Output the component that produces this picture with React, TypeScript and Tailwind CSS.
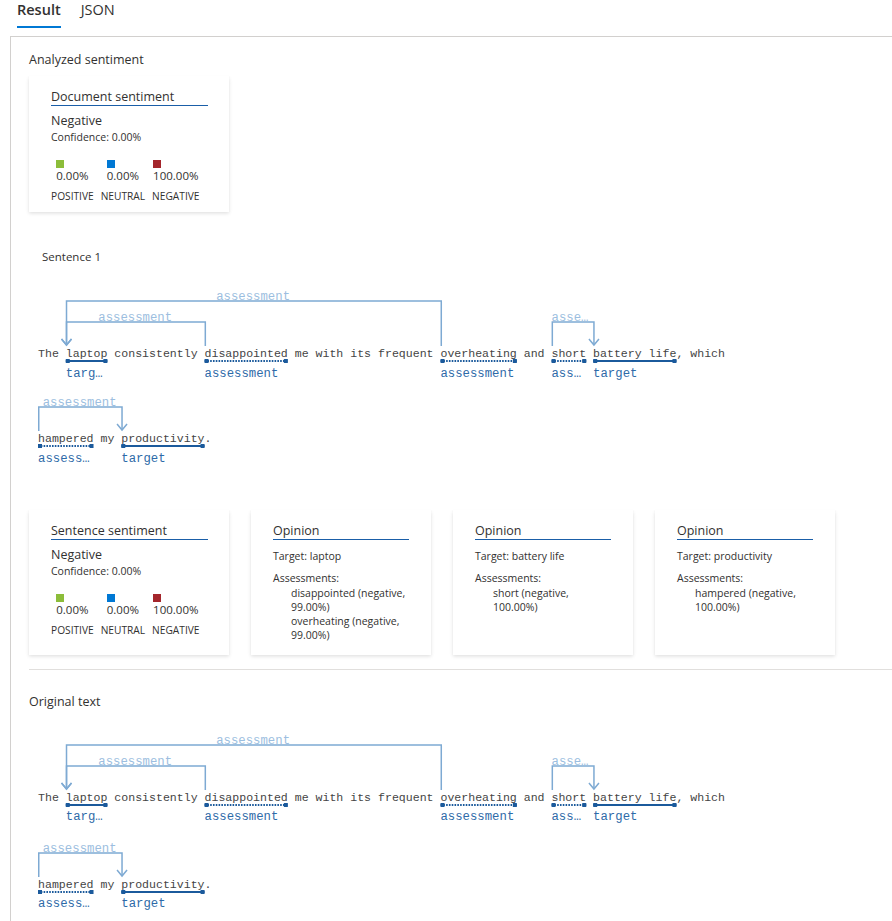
import React from 'react';

type Kind = 'target' | 'assessment';

interface Seg {
  text: string;
  kind?: Kind;
  id?: string;
}

interface Arc {
  from: string;
  to: string;
  level: number;
}

interface LineData {
  segs: Seg[];
  arcs: Arc[];
  levels: number;
}

// width of one monospace character, Liberation Mono at 11.57px
const CW = 6.94;

const lines: LineData[] = [
  {
    levels: 2,
    segs: [
      { text: 'The ' },
      { text: 'laptop', kind: 'target', id: 'laptop' },
      { text: ' consistently ' },
      { text: 'disappointed', kind: 'assessment', id: 'disappointed' },
      { text: ' me with its frequent ' },
      { text: 'overheating', kind: 'assessment', id: 'overheating' },
      { text: ' and ' },
      { text: 'short', kind: 'assessment', id: 'short' },
      { text: ' ' },
      { text: 'battery life', kind: 'target', id: 'battery' },
      { text: ', which' },
    ],
    arcs: [
      { from: 'disappointed', to: 'laptop', level: 1 },
      { from: 'overheating', to: 'laptop', level: 2 },
      { from: 'short', to: 'battery', level: 1 },
    ],
  },
  {
    levels: 1,
    segs: [
      { text: 'hampered', kind: 'assessment', id: 'hampered' },
      { text: ' my ' },
      { text: 'productivity', kind: 'target', id: 'productivity' },
      { text: '.' },
    ],
    arcs: [{ from: 'hampered', to: 'productivity', level: 1 }],
  },
];

const AnnotatedLine: React.FC<{ line: LineData }> = ({ line }) => {
  const yT = line.levels * 21 + 20;
  const h = yT + 28;
  const pos: Record<string, { x: number; w: number; kind: Kind }> = {};
  let idx = 0;
  line.segs.forEach((s) => {
    if (s.id && s.kind) pos[s.id] = { x: idx * CW, w: s.text.length * CW, kind: s.kind };
    idx += s.text.length;
  });
  const total = idx * CW + 20;
  const uy = yT + 9;

  return (
    <div className="relative" style={{ height: h }}>
      <svg className="absolute left-0 top-0 overflow-visible" width={total} height={h}>
        {/* underlines */}
        {Object.values(pos).map((p, i) => (
          <g key={i} fill="#1b5a9c">
            <line
              x1={p.x}
              x2={p.x + p.w}
              y1={uy}
              y2={uy}
              stroke="#1b5a9c"
              strokeWidth={2}
              strokeDasharray={p.kind === 'assessment' ? '1.6 1.2' : undefined}
            />
            <rect x={p.x} y={uy - 2} width={4} height={4} />
            <rect x={p.x + p.w - 4} y={uy - 2} width={4} height={4} />
          </g>
        ))}
        {/* arcs */}
        {line.arcs.map((a, i) => {
          const x1 = pos[a.from].x + 0.75;
          const x2 = pos[a.to].x + 0.75;
          const y = (line.levels - a.level) * 21 + 11;
          return (
            <g key={i} stroke="#7eaad3" strokeWidth={1.5} fill="none">
              <polyline points={`${x1},${yT - 6} ${x1},${y} ${x2},${y} ${x2},${yT - 7}`} />
              <polyline points={`${x2 - 5},${yT - 13} ${x2},${yT - 7} ${x2 + 5},${yT - 13}`} />
            </g>
          );
        })}
      </svg>

      {line.arcs.map((a, i) => {
        const x1 = pos[a.from].x;
        const x2 = pos[a.to].x;
        const y = (line.levels - a.level) * 21 + 11;
        return (
          <span
            key={i}
            className="absolute overflow-hidden text-ellipsis whitespace-nowrap text-center font-['Liberation_Mono',monospace] text-[12.3px] leading-[14px] text-[#9cbee0]"
            style={{ left: Math.min(x1, x2), width: Math.abs(x2 - x1), top: y - 11 }}
          >
            assessment
          </span>
        );
      })}

      <div
        className="flex whitespace-pre font-['Liberation_Mono',monospace] text-[11.57px] leading-4 text-[#444444]"
        style={{ paddingTop: yT - 6 }}
      >
        {line.segs.map((s, i) => (
          <span key={i} className="relative inline-block" style={{ width: s.text.length * CW }}>
            {s.text}
            {s.kind && (
              <span className="absolute left-0 top-[20.7px] w-full overflow-hidden text-ellipsis whitespace-nowrap text-[12.3px] leading-[14px] text-[#2e6aa8]">
                {s.kind}
              </span>
            )}
          </span>
        ))}
      </div>
    </div>
  );
};

const Annotation: React.FC<{ gap: string }> = ({ gap }) => (
  <div className="ml-[9px]">
    <AnnotatedLine line={lines[0]} />
    <div className={gap}>
      <AnnotatedLine line={lines[1]} />
    </div>
  </div>
);

const cardClass =
  'bg-white pt-[13px] shadow-[0_1.6px_3.6px_rgba(0,0,0,0.13),0_0.3px_0.9px_rgba(0,0,0,0.11)]';

const CardTitle: React.FC<{ children: React.ReactNode }> = ({ children }) => (
  <div className="border-b-[1.5px] border-[#1a5ea8] text-[12.5px] leading-4 text-[#323130]">{children}</div>
);

const scores = [
  { label: 'POSITIVE', value: '0.00%', color: 'bg-[#8cbd3a]' },
  { label: 'NEUTRAL', value: '0.00%', color: 'bg-[#0078d4]' },
  { label: 'NEGATIVE', value: '100.00%', color: 'bg-[#a4262c]' },
];

const SentimentCard: React.FC<{ title: string }> = ({ title }) => (
  <div className={`${cardClass} w-[200px] pb-[9px] pl-[22px] pr-[21px]`}>
    <CardTitle>{title}</CardTitle>
    <div className="mt-[7px] text-[12.5px] leading-4 text-[#323130]">Negative</div>
    <div className="mt-[1px] text-[10.5px] leading-[14px] text-[#323130]">Confidence: 0.00%</div>
    <div className="mt-4 flex gap-[7px]">
      {scores.map((s) => (
        <div key={s.label} className="flex flex-col items-center">
          <div className="flex flex-col items-start">
            <div className={`h-2 w-2 ${s.color}`} />
            <div className="text-[11.5px] leading-4 text-[#323130]">{s.value}</div>
          </div>
          <div className="mt-[5px] text-[10.2px] leading-[14px] text-[#323130]">{s.label}</div>
        </div>
      ))}
    </div>
  </div>
);

const OpinionCard: React.FC<{ target: string; items: string[] }> = ({ target, items }) => (
  <div className={`${cardClass} w-[180px] pb-[13px] px-[22px]`}>
    <CardTitle>Opinion</CardTitle>
    <div className="mt-[8.5px] text-[10.5px] leading-[14px] text-[#323130]">Target: {target}</div>
    <div className="mt-2 text-[10.5px] leading-[14px] text-[#323130]">Assessments:</div>
    <div className="mt-[1px] pl-[18px] text-[10.5px] leading-[14px] text-[#323130]">
      {items.map((it) => (
        <div key={it}>{it}</div>
      ))}
    </div>
  </div>
);

export default function App() {
  return (
    <div className="min-h-screen bg-white font-['Open_Sans',sans-serif] text-[#323130]">
      {/* Tabs */}
      <div className="flex gap-5 pl-[17px]">
        <div className="flex flex-col">
          <span className="text-[14.5px] leading-5 font-semibold text-[#323130]">Result</span>
          <div className="mt-[6px] h-[2px] bg-[#0078d4]" />
        </div>
        <span className="text-[14.5px] leading-5 text-[#323130]">JSON</span>
      </div>

      <div className="mt-[8px] ml-[10px] min-h-[885px] border-l border-t border-[#d2d0ce] pl-[18px] pt-[15px]">
        <div className="text-[12.5px] leading-4 text-[#323130]">Analyzed sentiment</div>
        <div className="mt-[8px] flex">
          <SentimentCard title="Document sentiment" />
        </div>

        <div className="mt-[37px] ml-[13px] text-[11.5px] leading-4 text-[#323130]">Sentence 1</div>
        <div className="mt-[25px]">
          <Annotation gap="mt-[16px]" />
        </div>

        <div className="mt-[45px] flex items-stretch gap-[22px]">
          <SentimentCard title="Sentence sentiment" />
          <OpinionCard
            target="laptop"
            items={['disappointed (negative, 99.00%)', 'overheating (negative, 99.00%)']}
          />
          <OpinionCard target="battery life" items={['short (negative, 100.00%)']} />
          <OpinionCard target="productivity" items={['hampered (negative, 100.00%)']} />
        </div>

        <div className="mt-[14px] border-t border-[#e1dfdd]" />
        <div className="mt-[24px] text-[12.5px] leading-4 text-[#323130]">Original text</div>
        <div className="mt-[24px]">
          <Annotation gap="mt-[18px]" />
        </div>
      </div>
    </div>
  );
}
